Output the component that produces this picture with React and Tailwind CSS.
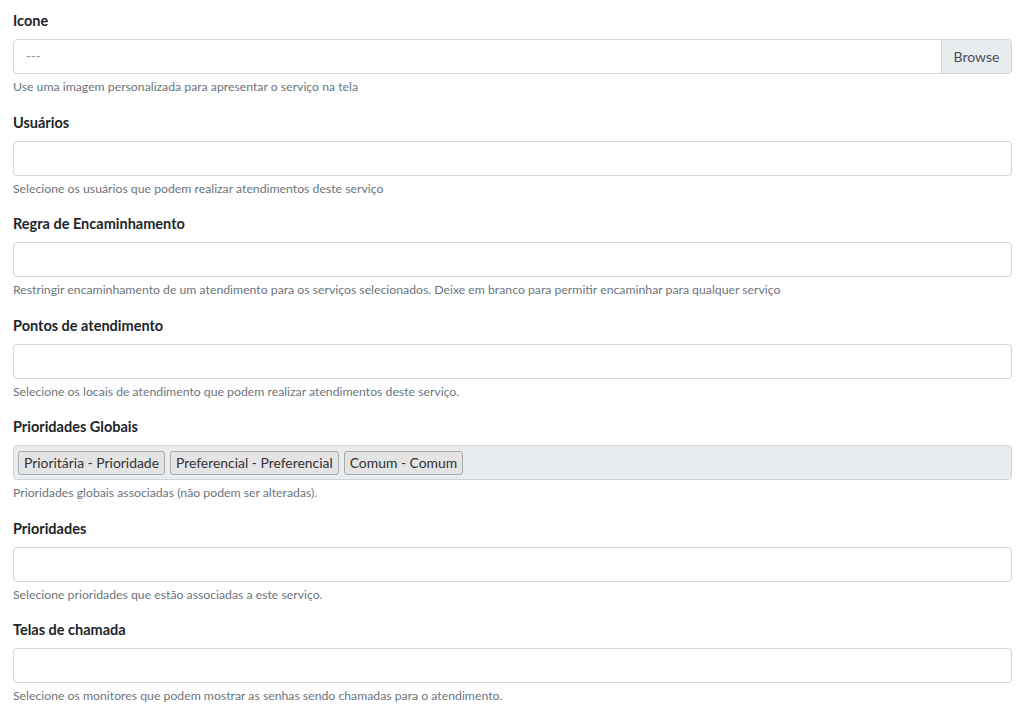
import React from 'react';

const font = { fontFamily: 'Lato, "Liberation Sans", sans-serif' };

const Field = ({ label, help, children }) => (
  <div className="mb-[16.5px]">
    <label className="block text-[14.5px] font-bold leading-5 text-[#212529] mb-2">{label}</label>
    {children}
    <p className="mt-1 text-[12.25px] leading-[18px] text-[#6c757d]">{help}</p>
  </div>
);

const EmptyInput = () => (
  <div className="h-[35px] w-full rounded border border-[#ced4da] bg-white" />
);

export default function App() {
  const globals = ['Prioritária - Prioridade', 'Preferencial - Preferencial', 'Comum - Comum'];
  return (
    <div className="min-h-screen bg-white px-[13px] pt-[11px]" style={font}>
      <div className="w-[999px]">
        <Field label="Icone" help="Use uma imagem personalizada para apresentar o serviço na tela">
          <div className="flex h-[35px] w-full overflow-hidden rounded border border-[#ced4da] bg-white">
            <div className="flex flex-1 items-center px-3 text-[13px] text-[#999]">---</div>
            <div className="flex w-[70px] items-center justify-center border-l border-[#ced4da] bg-[#e9ecef] text-[14px] text-[#495057]">
              Browse
            </div>
          </div>
        </Field>
        <Field label="Usuários" help="Selecione os usuários que podem realizar atendimentos deste serviço">
          <EmptyInput />
        </Field>
        <Field
          label="Regra de Encaminhamento"
          help="Restringir encaminhamento de um atendimento para os serviços selecionados. Deixe em branco para permitir encaminhar para qualquer serviço"
        >
          <EmptyInput />
        </Field>
        <Field label="Pontos de atendimento" help="Selecione os locais de atendimento que podem realizar atendimentos deste serviço.">
          <EmptyInput />
        </Field>
        <Field label="Prioridades Globais" help="Prioridades globais associadas (não podem ser alteradas).">
          <div className="flex h-[35px] w-full items-center gap-[5px] rounded border border-[#ced4da] bg-[#e9ecef] px-[4px]">
            {globals.map((g) => (
              <span
                key={g}
                className="rounded-[3px] border border-[#aaa] bg-[#e4e4e4] px-[5px] text-[13.9px] leading-[22px] text-[#333]"
              >
                {g}
              </span>
            ))}
          </div>
        </Field>
        <Field label="Prioridades" help="Selecione prioridades que estão associadas a este serviço.">
          <EmptyInput />
        </Field>
        <Field label="Telas de chamada" help="Selecione os monitores que podem mostrar as senhas sendo chamadas para o atendimento.">
          <EmptyInput />
        </Field>
      </div>
    </div>
  );
}
